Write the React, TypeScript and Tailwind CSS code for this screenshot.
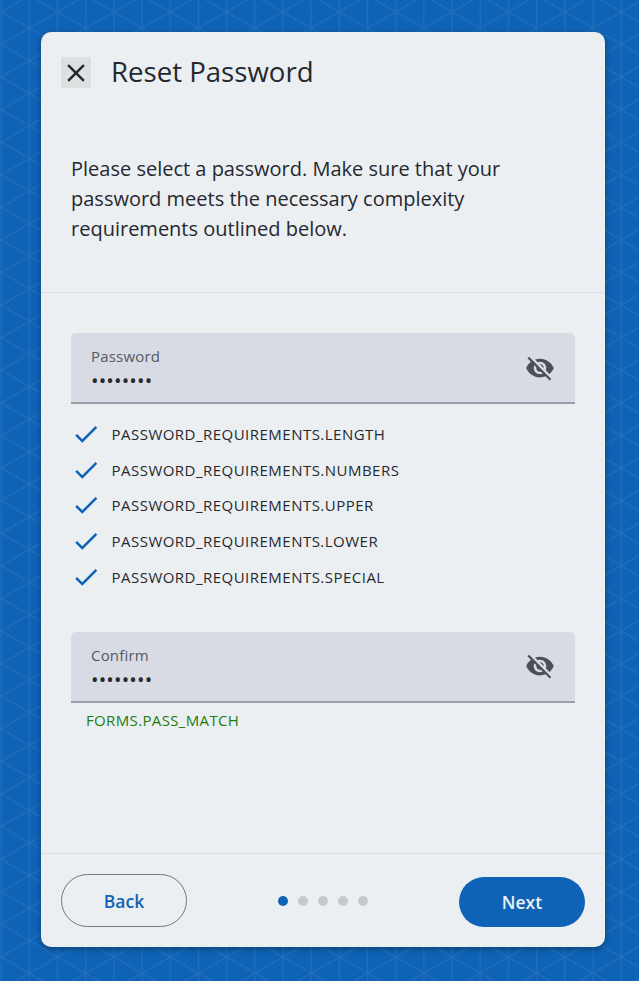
import React from "react";
import { MdCheck, MdClose, MdVisibilityOff } from "react-icons/md";

const requirements = ["LENGTH", "NUMBERS", "UPPER", "LOWER", "SPECIAL"];

function Backdrop() {
  return (
    <svg className="absolute inset-0 h-full w-full" aria-hidden="true">
      <defs>
        <pattern id="lattice" x="1.2" y="11.8" width="56.36" height="32.59" patternUnits="userSpaceOnUse">
          <path
            d="M0 -5V40M56.36 -5V40M28.18 -5V40M-56.36 -32.59L112.72 65.18M112.72 -32.59L-56.36 65.18"
            fill="none"
            stroke="#206fbb"
            strokeWidth="1.2"
          />
        </pattern>
      </defs>
      <rect width="100%" height="100%" fill="url(#lattice)" />
    </svg>
  );
}

function PasswordField({ label }: { label: string }) {
  return (
    <div className="flex h-[71px] items-center justify-between rounded-t-[5px] border-b-2 border-[#9a9ea8] bg-[#d8dbe4] pr-5 pl-5">
      <div className="flex flex-col pt-[2px]">
        <span className="text-[15px] leading-5 tracking-[0.2px] text-[#555960]">{label}</span>
        <span className="mt-[5px] text-[20px] leading-5 tracking-[0.15px] text-[#25292e]">••••••••</span>
      </div>
      <MdVisibilityOff className="size-[30px] text-[#4b4f58]" />
    </div>
  );
}

export default function App() {
  return (
    <div className="relative h-[981px] w-[639px] overflow-hidden bg-[#0f63b6] pt-8 pl-[41px] font-['Open_Sans',sans-serif] text-[#25292e]">
      <Backdrop />
      <main className="relative flex h-[915px] w-[564px] flex-col rounded-[10px] bg-[#ebeff2] shadow-[0_2px_6px_rgba(0,0,0,0.35)]">
        <header className="h-[261px] border-b border-[#dadee1] pt-[25px]">
          <div className="flex h-[31px] items-center pl-5">
            <button className="flex h-[31px] w-[30px] items-center justify-center bg-[#dce0e1]">
              <MdClose className="size-[30px] shrink-0" />
            </button>
            <h1 className="-mt-[3px] ml-5 text-[27.6px] leading-[30px]">Reset Password</h1>
          </div>
          <p className="mt-[66px] ml-[30px] w-[470px] text-[20px] leading-[30px]">
            Please select a password. Make sure that your password meets the necessary complexity requirements outlined below.
          </p>
        </header>

        <section className="flex-1 px-[30px] pt-10">
          <PasswordField label="Password" />
          <ul className="mt-[12px]">
            {requirements.map((name) => (
              <li key={name} className="flex h-[35.7px] items-center">
                <MdCheck className="size-[30px] text-[#0f63b6]" />
                <span className="ml-[10.5px] text-[15px] leading-5 tracking-[0.48px]">PASSWORD_REQUIREMENTS.{name}</span>
              </li>
            ))}
          </ul>
          <div className="mt-[37.5px]">
            <PasswordField label="Confirm" />
          </div>
          <p className="mt-[7.5px] ml-[15px] text-[15px] leading-5 tracking-[0.35px] text-[#1e7d10]">FORMS.PASS_MATCH</p>
        </section>

        <footer className="flex h-[94px] items-center justify-between border-t border-[#dadee1] px-5">
          <button className="h-[53px] w-[126px] rounded-[27px] border border-[#73777b] pt-px text-[17.5px] font-semibold text-[#0f63b6]">
            Back
          </button>
          <div className="flex gap-[10px]">
            {[0, 1, 2, 3, 4].map((step) => (
              <span key={step} className={step === 0 ? "size-[10px] rounded-full bg-[#0f63b6]" : "size-[10px] rounded-full bg-[#c5c9cc]"} />
            ))}
          </div>
          <button className="mt-[2px] h-[50px] w-[126px] rounded-[25px] bg-[#0f63b6] pt-[2px] text-[17.5px] font-semibold text-[#ebeff2]">
            Next
          </button>
        </footer>
      </main>
    </div>
  );
}
